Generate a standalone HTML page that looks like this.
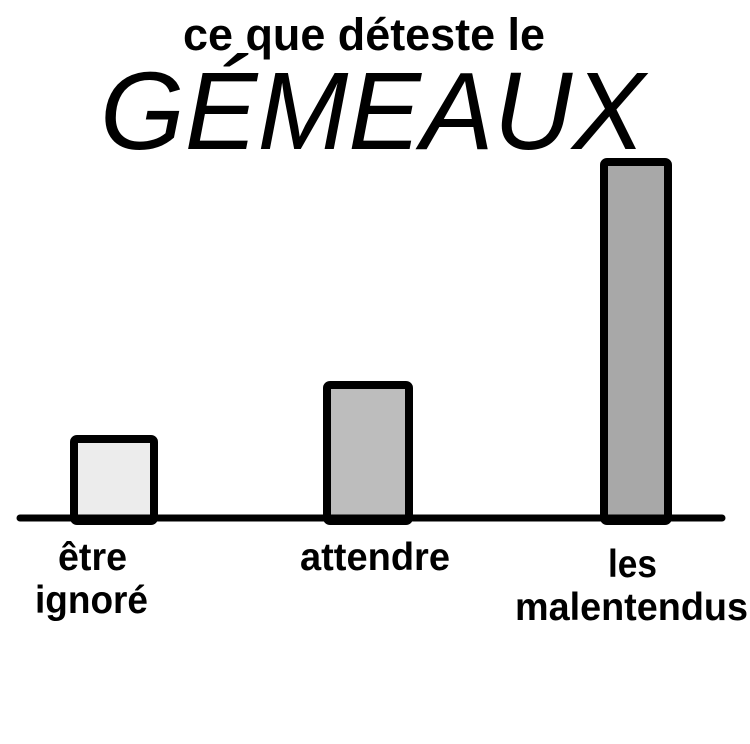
<!DOCTYPE html>
<html><head><meta charset="utf-8"><style>
html,body{margin:0;padding:0;background:#fff;width:750px;height:744px;overflow:hidden}
svg{display:block}
text{font-family:"Liberation Sans",Arial,sans-serif;fill:#000}
</style></head><body>
<svg width="750" height="744" viewBox="0 0 750 744" xmlns="http://www.w3.org/2000/svg">
<text x="183" y="50" font-size="45" font-weight="bold" textLength="362" lengthAdjust="spacingAndGlyphs">ce que déteste le</text>
<text x="100" y="149" font-size="110" font-style="italic" textLength="545" lengthAdjust="spacingAndGlyphs">GÉMEAUX</text>
<rect x="74" y="439" width="80" height="82" rx="3" fill="#ececec" stroke="#000" stroke-width="8"/>
<rect x="327" y="385" width="82" height="136" rx="3" fill="#bdbdbd" stroke="#000" stroke-width="8"/>
<rect x="604" y="162" width="64" height="359" rx="3" fill="#a8a8a8" stroke="#000" stroke-width="8"/>
<path d="M20 518 L722 518" stroke="#000" stroke-width="7" stroke-linecap="round"/>
<text x="58" y="570" font-size="39" font-weight="bold" textLength="69" lengthAdjust="spacingAndGlyphs">être</text>
<text x="35" y="613" font-size="39" font-weight="bold" textLength="113" lengthAdjust="spacingAndGlyphs">ignoré</text>
<text x="300" y="570" font-size="39" font-weight="bold" textLength="150" lengthAdjust="spacingAndGlyphs">attendre</text>
<text x="608" y="577" font-size="39" font-weight="bold" textLength="49" lengthAdjust="spacingAndGlyphs">les</text>
<text x="515" y="620" font-size="39" font-weight="bold" textLength="233" lengthAdjust="spacingAndGlyphs">malentendus</text>
</svg>
</body></html>
